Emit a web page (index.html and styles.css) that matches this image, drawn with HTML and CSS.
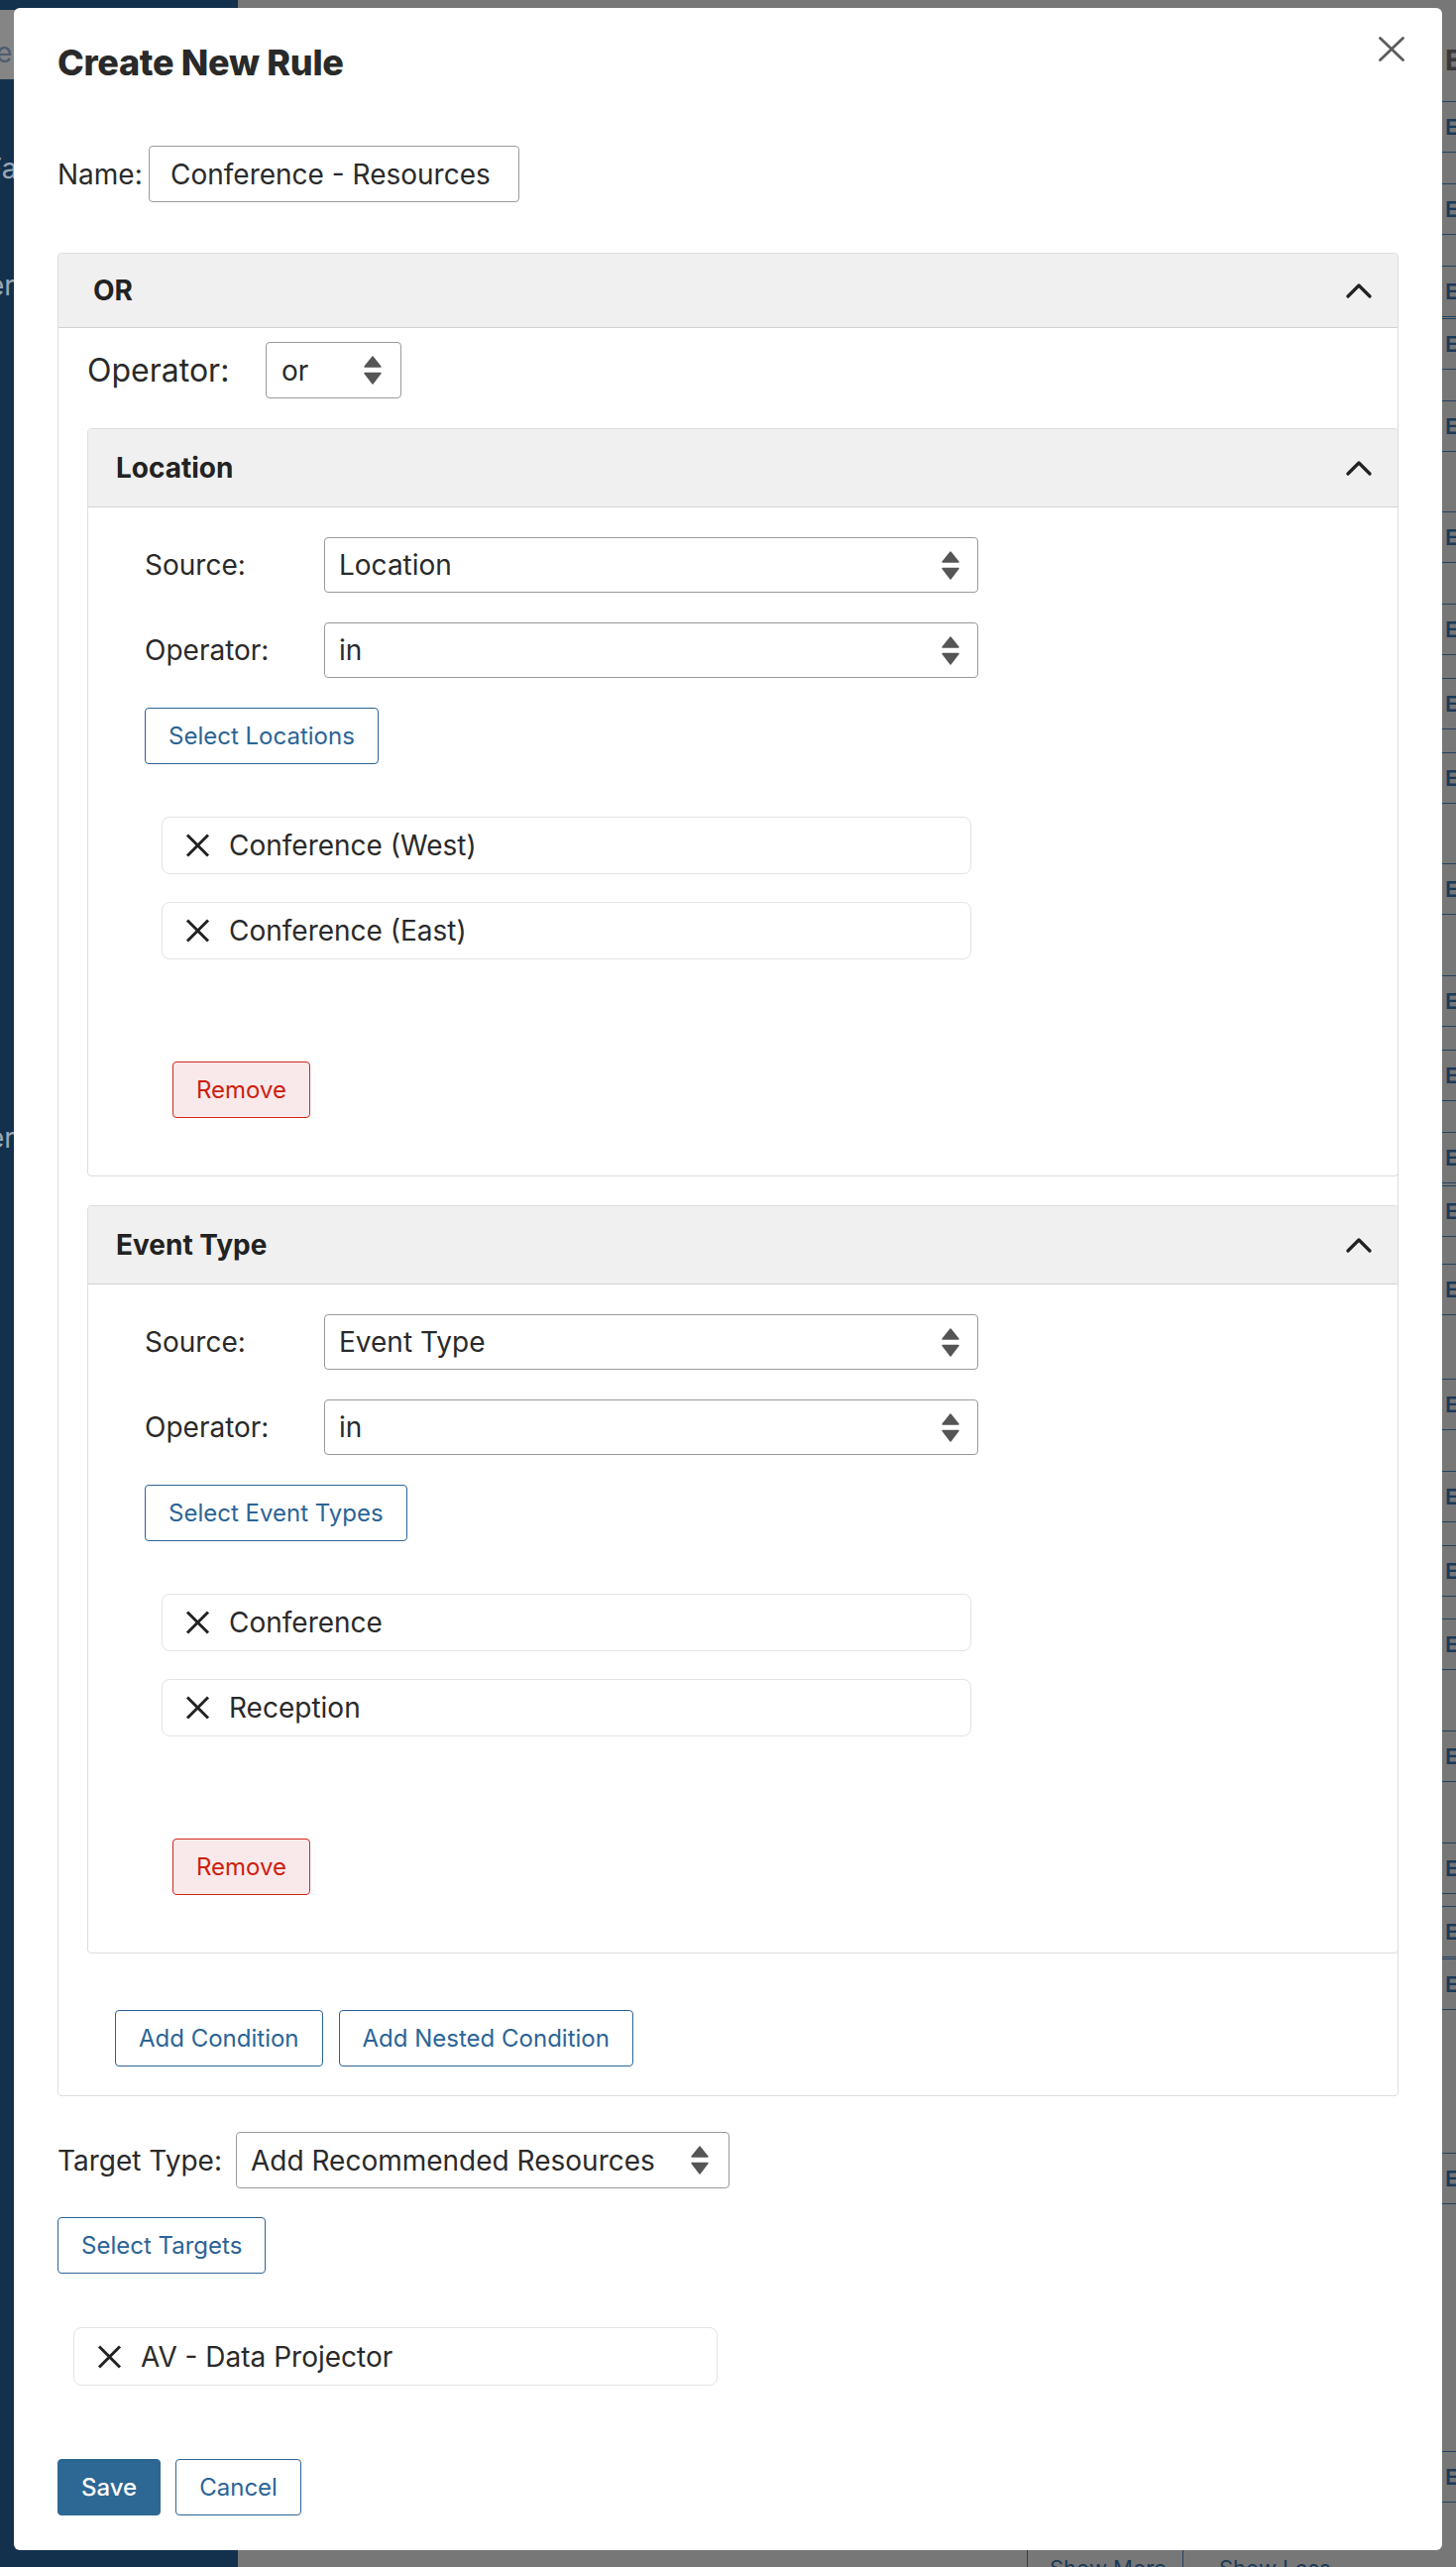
FILE: index.html
```html
<!DOCTYPE html>
<html lang="en">
<head>
<meta charset="utf-8">
<title>Create New Rule</title>
<link rel="stylesheet" href="styles.css">
</head>
<body>
<div class="page">
  <aside class="sidebar">
    <div class="side-active"><span class="side-frag">e</span></div>
    <div class="side-item side-item-1"><span class="side-frag">Fa</span></div>
    <div class="side-item side-item-2"><span class="side-frag">er</span></div>
    <div class="side-item side-item-3"><span class="side-frag">J</span></div>
    <div class="side-item side-item-4"><span class="side-frag">er</span></div>
  </aside>
  <main class="main">
    <div class="bg-head">E</div>
    <div class="bg-row">E</div>
    <div class="bg-row" style="margin-top:31px">E</div>
    <div class="bg-row" style="margin-top:31px">E</div>
    <div class="bg-row" style="margin-top:1px">E</div>
    <div class="bg-row" style="margin-top:31px">E</div>
    <div class="bg-row" style="margin-top:60px">E</div>
    <div class="bg-row" style="margin-top:41px">E</div>
    <div class="bg-row" style="margin-top:23px">E</div>
    <div class="bg-row" style="margin-top:23px">E</div>
    <div class="bg-row" style="margin-top:60px">E</div>
    <div class="bg-row" style="margin-top:61px">E</div>
    <div class="bg-row" style="margin-top:23px">E</div>
    <div class="bg-row" style="margin-top:31px">E</div>
    <div class="bg-row" style="margin-top:2px">E</div>
    <div class="bg-row" style="margin-top:27px">E</div>
    <div class="bg-row" style="margin-top:64px">E</div>
    <div class="bg-row" style="margin-top:41px">E</div>
    <div class="bg-row" style="margin-top:23px">E</div>
    <div class="bg-row" style="margin-top:22px">E</div>
    <div class="bg-row" style="margin-top:61px">E</div>
    <div class="bg-row" style="margin-top:61px">E</div>
    <div class="bg-row" style="margin-top:12px">E</div>
    <div class="bg-row" style="margin-top:1px">E</div>
    <div class="bg-row" style="margin-top:144px">E</div>
    <div class="bg-row" style="margin-top:249px">E</div>
    <div class="bg-pager">
      <span class="pager-cell">Show More</span>
      <span class="pager-cell pager-cell-2">Show Less</span>
    </div>
  </main>
</div>

<div class="modal" role="dialog" aria-labelledby="modal-title">
  <button class="close-btn" aria-label="Close">
    <svg width="26" height="25" viewBox="0 0 26 25"><path d="M1.5 1.5 L24.5 23.5 M24.5 1.5 L1.5 23.5" fill="none" stroke="#5c5c5c" stroke-width="2.8" stroke-linecap="round"/></svg>
  </button>
  <h2 class="modal-title" id="modal-title">Create New Rule</h2>

  <div class="name-row">
    <label class="name-label">Name:</label>
    <div class="text-input">Conference - Resources</div>
  </div>

  <section class="panel or-panel">
    <header class="panel-head or-head">
      <span>OR</span>
      <svg class="chev" width="26" height="15" viewBox="0 0 26 15"><polyline points="2,13 13,2 24,13" fill="none" stroke="#222" stroke-width="3.2" stroke-linecap="round" stroke-linejoin="round"/></svg>
    </header>
    <div class="or-body">
      <div class="op-row">
        <label class="op-label">Operator:</label>
        <div class="select select-or">
          <span>or</span>
          <svg width="18" height="29" viewBox="0 0 18 29"><path d="M9 1 L17 11 H1 Z M1 17.5 H17 L9 28 Z" fill="#555" stroke="#555" stroke-width="1.4" stroke-linejoin="round"/></svg>
        </div>
      </div>

      <section class="panel cond">
        <header class="panel-head cond-head">
          <span>Location</span>
          <svg class="chev" width="26" height="15" viewBox="0 0 26 15"><polyline points="2,13 13,2 24,13" fill="none" stroke="#222" stroke-width="3.2" stroke-linecap="round" stroke-linejoin="round"/></svg>
        </header>
        <div class="cond-body">
          <div class="field">
            <label class="field-label">Source:</label>
            <div class="select select-wide">
              <span>Location</span>
              <svg width="18" height="29" viewBox="0 0 18 29"><path d="M9 1 L17 11 H1 Z M1 17.5 H17 L9 28 Z" fill="#555" stroke="#555" stroke-width="1.4" stroke-linejoin="round"/></svg>
            </div>
          </div>
          <div class="field field-next">
            <label class="field-label">Operator:</label>
            <div class="select select-wide">
              <span>in</span>
              <svg width="18" height="29" viewBox="0 0 18 29"><path d="M9 1 L17 11 H1 Z M1 17.5 H17 L9 28 Z" fill="#555" stroke="#555" stroke-width="1.4" stroke-linejoin="round"/></svg>
            </div>
          </div>
          <button class="btn btn-select">Select Locations</button>
          <ul class="chips">
            <li class="chip">
              <svg width="25" height="24" viewBox="0 0 25 24"><path d="M2 1.5 L23 22.5 M23 1.5 L2 22.5" fill="none" stroke="#222" stroke-width="3"/></svg>
              <span>Conference (West)</span>
            </li>
            <li class="chip">
              <svg width="25" height="24" viewBox="0 0 25 24"><path d="M2 1.5 L23 22.5 M23 1.5 L2 22.5" fill="none" stroke="#222" stroke-width="3"/></svg>
              <span>Conference (East)</span>
            </li>
          </ul>
          <button class="btn btn-danger">Remove</button>
        </div>
      </section>

      <section class="panel cond cond-next">
        <header class="panel-head cond-head">
          <span>Event Type</span>
          <svg class="chev" width="26" height="15" viewBox="0 0 26 15"><polyline points="2,13 13,2 24,13" fill="none" stroke="#222" stroke-width="3.2" stroke-linecap="round" stroke-linejoin="round"/></svg>
        </header>
        <div class="cond-body">
          <div class="field">
            <label class="field-label">Source:</label>
            <div class="select select-wide">
              <span>Event Type</span>
              <svg width="18" height="29" viewBox="0 0 18 29"><path d="M9 1 L17 11 H1 Z M1 17.5 H17 L9 28 Z" fill="#555" stroke="#555" stroke-width="1.4" stroke-linejoin="round"/></svg>
            </div>
          </div>
          <div class="field field-next">
            <label class="field-label">Operator:</label>
            <div class="select select-wide">
              <span>in</span>
              <svg width="18" height="29" viewBox="0 0 18 29"><path d="M9 1 L17 11 H1 Z M1 17.5 H17 L9 28 Z" fill="#555" stroke="#555" stroke-width="1.4" stroke-linejoin="round"/></svg>
            </div>
          </div>
          <button class="btn btn-select">Select Event Types</button>
          <ul class="chips">
            <li class="chip">
              <svg width="25" height="24" viewBox="0 0 25 24"><path d="M2 1.5 L23 22.5 M23 1.5 L2 22.5" fill="none" stroke="#222" stroke-width="3"/></svg>
              <span>Conference</span>
            </li>
            <li class="chip">
              <svg width="25" height="24" viewBox="0 0 25 24"><path d="M2 1.5 L23 22.5 M23 1.5 L2 22.5" fill="none" stroke="#222" stroke-width="3"/></svg>
              <span>Reception</span>
            </li>
          </ul>
          <button class="btn btn-danger">Remove</button>
        </div>
      </section>

      <div class="cond-actions">
        <button class="btn">Add Condition</button>
        <button class="btn">Add Nested Condition</button>
      </div>
    </div>
  </section>

  <div class="target-row">
    <label class="target-label">Target Type:</label>
    <div class="select select-target">
      <span>Add Recommended Resources</span>
      <svg width="18" height="29" viewBox="0 0 18 29"><path d="M9 1 L17 11 H1 Z M1 17.5 H17 L9 28 Z" fill="#555" stroke="#555" stroke-width="1.4" stroke-linejoin="round"/></svg>
    </div>
  </div>
  <button class="btn btn-targets">Select Targets</button>
  <div class="chip target-chip">
    <svg width="25" height="24" viewBox="0 0 25 24"><path d="M2 1.5 L23 22.5 M23 1.5 L2 22.5" fill="none" stroke="#222" stroke-width="3"/></svg>
    <span>AV - Data Projector</span>
  </div>

  <div class="modal-footer">
    <button class="btn btn-primary">Save</button>
    <button class="btn">Cancel</button>
  </div>
</div>
</body>
</html>
```

FILE: styles.css
```css
* { box-sizing: border-box; }

html, body {
  margin: 0;
  padding: 0;
}

body {
  width: 1469px;
  height: 2590px;
  overflow: hidden;
  position: relative;
  font-family: Inter, "Noto Sans", "Liberation Sans", sans-serif;
  color: #2a2a2a;
  background: #777777;
}

/* ---------- dimmed page behind the dialog ---------- */
.page {
  display: flex;
  width: 1469px;
  height: 2590px;
  overflow: hidden;
}

.sidebar {
  flex: 0 0 240px;
  background: #13314d;
  color: #9aa8b6;
  font-size: 28px;
  line-height: 34px;
  white-space: nowrap;
  overflow: hidden;
}

.side-active {
  margin-top: 10px;
  height: 70px;
  background: #858585;
  color: #4d5d6d;
  padding-top: 26px;
}

.side-frag {
  display: block;
  text-indent: -4px;
}

.side-item-1 { padding-top: 73px; }
.side-item-1 .side-frag { text-indent: -14px; }
.side-item-2 { padding-top: 84px; }
.side-item-2 .side-frag { text-indent: -12px; }
.side-item-3 { padding-top: 712px; }
.side-item-3 .side-frag { text-indent: -16px; color: #6f8296; }
.side-item-4 { padding-top: 80px; }
.side-item-4 .side-frag { text-indent: -12px; }

.main {
  flex: 1;
  background: #777777;
  display: flex;
  flex-direction: column;
  color: #1c3a58;
  font-size: 22px;
  white-space: nowrap;
  overflow: hidden;
}

.bg-head {
  height: 102px;
  padding-left: 1218px;
  padding-top: 45px;
  font-size: 28px;
  line-height: 32px;
  font-weight: 700;
  color: #3a3a3a;
}

.bg-row {
  flex: 0 0 52px;
  height: 52px;
  border-top: 1px solid #23425f;
  border-bottom: 1px solid #23425f;
  padding-left: 1218px;
  display: flex;
  align-items: center;
  font-weight: 600;
}

.bg-pager {
  margin-top: auto;
  flex: 0 0 17px;
  height: 17px;
  display: flex;
  padding-left: 796px;
  overflow: hidden;
}

.pager-cell {
  width: 157px;
  border-left: 1px solid #23425f;
  padding: 5px 0 0 22px;
  line-height: 26px;
}

.pager-cell-2 { padding-left: 36px; }

/* ---------- dialog ---------- */
.modal {
  position: absolute;
  left: 14px;
  top: 8px;
  width: 1441px;
  height: 2565px;
  background: #ffffff;
  border-radius: 6px;
  padding: 33px 44px 0 44px;
}

.close-btn {
  position: absolute;
  top: 29px;
  right: 38px;
  width: 26px;
  height: 25px;
  padding: 0;
  border: 0;
  background: transparent;
  display: block;
}

.close-btn svg { display: block; }

.modal-title {
  margin: 0;
  font-size: 36px;
  line-height: 44px;
  font-weight: 800;
  color: #2a2a2a;
  letter-spacing: -0.3px;
}

.name-row {
  margin-top: 62px;
  display: flex;
  align-items: center;
  height: 57px;
}

.name-label {
  font-size: 28px;
  width: 92px;
}

.text-input {
  width: 374px;
  height: 57px;
  border: 1px solid #9a9a9a;
  border-radius: 4px;
  padding: 0 21px;
  display: flex;
  align-items: center;
  font-size: 28px;
  white-space: nowrap;
}

/* panels */
.panel {
  border: 1px solid #dddddd;
  border-radius: 4px;
  background: #ffffff;
}

.or-panel {
  margin-top: 51px;
}

.panel-head {
  display: flex;
  align-items: center;
  justify-content: space-between;
  background: #f0f0f0;
  border-bottom: 1px solid #d2d2d2;
  font-weight: 700;
  font-size: 28px;
  color: #222;
  border-radius: 4px 4px 0 0;
}

.or-head {
  height: 75px;
  padding: 0 26px 0 35px;
}

.chev { display: block; }

.or-body {
  padding: 14px 0 29px 29px;
}

.op-row {
  display: flex;
  align-items: center;
  height: 57px;
}

.op-label {
  width: 180px;
  font-size: 32px;
}

.select {
  display: flex;
  align-items: center;
  justify-content: space-between;
  border: 1px solid #9a9a9a;
  border-radius: 4px;
  font-size: 28px;
  color: #2a2a2a;
  white-space: nowrap;
  background: #fff;
}

.select svg { display: block; flex: none; }

.select-or {
  width: 137px;
  height: 57px;
  padding: 0 19px 0 15px;
}

.select-wide {
  width: 660px;
  height: 56px;
  padding: 0 18px 0 14px;
}

.select-target {
  height: 57px;
  padding: 0 20px 0 14px;
  gap: 36px;
}

.cond {
  margin-top: 30px;
  margin-right: -1px;
}

.cond-next { margin-top: 29px; }

.cond-head {
  height: 79px;
  padding: 0 26px 0 28px;
}

.cond-body {
  padding: 30px 0 58px 57px;
}

.field {
  display: flex;
  align-items: center;
}

.field-next { margin-top: 30px; }

.field-label {
  width: 181px;
  font-size: 28px;
}

/* buttons */
.btn {
  display: inline-flex;
  align-items: center;
  justify-content: center;
  height: 57px;
  padding: 0 23px;
  border: 1px solid #2b6496;
  border-radius: 4px;
  background: #ffffff;
  color: #2b6496;
  font-family: Inter, "Noto Sans", "Liberation Sans", sans-serif;
  font-size: 24px;
  white-space: nowrap;
  cursor: pointer;
}

.btn-select { margin-top: 30px; }

.btn-danger {
  margin-top: 103px;
  margin-left: 28px;
  background: #f9e9ea;
  border-color: #d2281b;
  color: #cc2111;
}

.btn-primary {
  background: #2d6793;
  border-color: #2d6793;
  color: #ffffff;
  font-weight: 500;
}

/* chips */
.chips {
  list-style: none;
  margin: 53px 0 0 17px;
  padding: 0;
  display: flex;
  flex-direction: column;
  gap: 28px;
}

.chip {
  width: 817px;
  height: 58px;
  border: 1px solid #e4e4e4;
  border-radius: 8px;
  display: flex;
  align-items: center;
  gap: 19px;
  padding-left: 23px;
  font-size: 28px;
  color: #2a2a2a;
  white-space: nowrap;
}

.chip svg { display: block; flex: none; }

.cond-actions {
  margin: 57px 0 0 28px;
  display: flex;
  gap: 16px;
}

/* target section */
.target-row {
  margin-top: 36px;
  display: flex;
  align-items: center;
}

.target-label {
  width: 180px;
  font-size: 28px;
}

.btn-targets { margin-top: 29px; }

.target-chip {
  margin: 54px 0 0 16px;
  width: 650px;
  height: 59px;
}

.modal-footer {
  margin-top: 74px;
  display: flex;
  gap: 15px;
}
```
